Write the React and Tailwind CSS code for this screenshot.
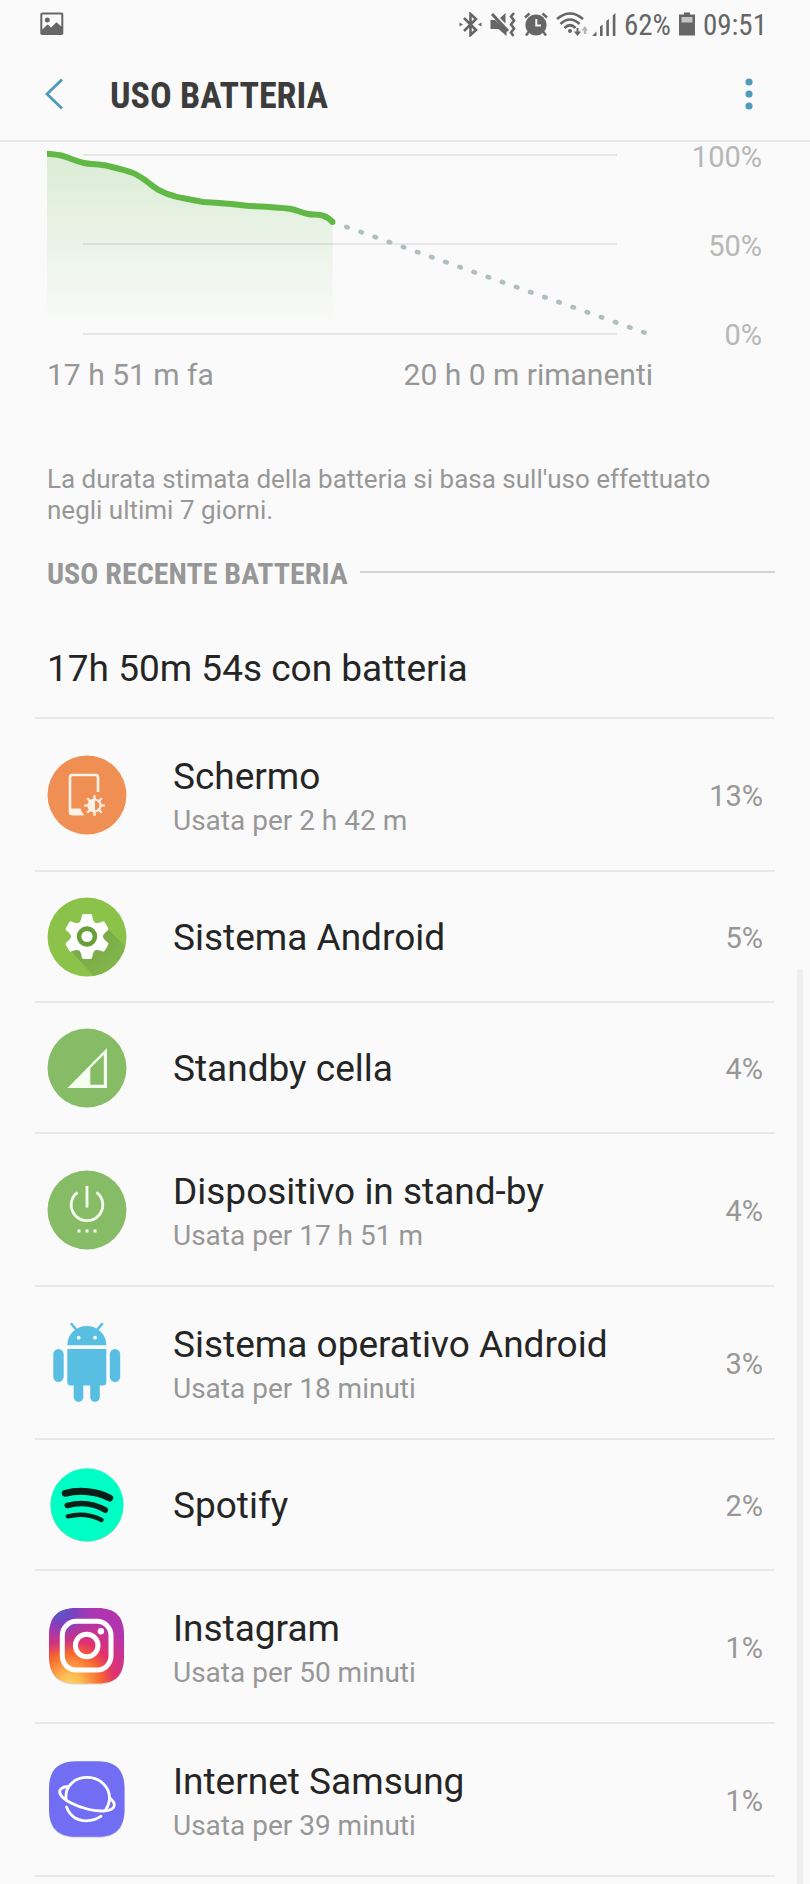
import React from 'react';

const CONDENSED = "font-['Roboto_Condensed','Liberation_Sans_Narrow',Roboto,sans-serif]";

function ScreenIcon() {
    return (
        <svg viewBox="0 0 80 80" className="size-20">
            <circle cx="40" cy="40" r="39.5" fill="#ef8f53" />
            <path d="M51 37V22.500Q51 20 48.500 20H25.500Q23 20 23 22.500V56.500Q23 59 25.500 59H36" fill="none" stroke="#fff3e9" strokeWidth="2.600" />
            <path d="M22 53.500H33.500Q34 57.500 37.500 60.200H25Q22 60.200 22 57Z" fill="#fff3e9" />
            <g stroke="#fff3e9" strokeWidth="2.200">
                {[0, 45, 90, 135, 180, 225, 270, 315].map((deg) => (
                    <path key={deg} d="M47.500 44V40.200" transform={`rotate(${deg} 47.500 50.500)`} />
                ))}
                <circle cx="47.500" cy="50.500" r="6" fill="none" />
            </g>
            <path d="M48 44.500A6 6 0 0 0 48 56.500Z" fill="#fff3e9" />
        </svg>
    );
}

function GearIcon() {
    return (
        <svg viewBox="0 0 80 80" className="size-20">
            <defs>
                <clipPath id="gear-disc"><circle cx="40" cy="40" r="39.500" /></clipPath>
                <linearGradient id="gear-shadow" x1="0.3" y1="0.3" x2="0.75" y2="0.75">
                    <stop offset="0" stopColor="#7aab49" />
                    <stop offset="1" stopColor="#84b84a" />
                </linearGradient>
            </defs>
            <circle cx="40" cy="40" r="39.500" fill="#8bc34a" />
            <path d="M60 31L90 61V90H57L24 54Z" fill="url(#gear-shadow)" clipPath="url(#gear-disc)" />
            <g fill="#fff">
                <circle cx="40" cy="39.500" r="16" />
                {[0, 60, 120, 180, 240, 300].map((deg) => (
                    <path key={deg} d="M29 28.500Q34.300 25.500 34.700 19Q34.900 17 36.700 17H43.300Q45.100 17 45.300 19Q45.700 25.500 51 28.500V36H29Z" transform={`rotate(${deg} 40 39.500)`} />
                ))}
            </g>
            <circle cx="40" cy="39.500" r="7.900" fill="none" stroke="#689f38" strokeWidth="4.600" />
        </svg>
    );
}

function CellIcon() {
    return (
        <svg viewBox="0 0 80 80" className="size-20">
            <circle cx="40" cy="40" r="39.500" fill="#86bc66" />
            <path d="M20.500 60L60 20V60ZM43.300 40V56.700H56.800V26.800Z" fill="#f5fff0" fillRule="evenodd" />
        </svg>
    );
}

function PowerIcon() {
    return (
        <svg viewBox="0 0 80 80" className="size-20">
            <circle cx="40" cy="40" r="39.500" fill="#86bc66" />
            <path d="M30.500 22.300A15.800 15.800 0 1 0 49.500 22.300M40 16V37.500" fill="none" stroke="#f5fff0" strokeWidth="2.800" />
            <path d="M30.500 59.500h3v3h-3zM38.500 59.500h3v3h-3zM46.500 59.500h3v3h-3z" fill="#f5fff0" />
        </svg>
    );
}

function AndroidIcon() {
    return (
        <svg viewBox="0 0 80 80" className="size-20" fill="#58bfe3">
            <path d="M20.300 22.300C20.300 11 29 3 39.800 3S59.300 11 59.300 22.300Z" />
            <path d="M24.500 1L29.500 7M55 1L50 7" stroke="#58bfe3" strokeWidth="2.600" strokeLinecap="round" />
            <path d="M20.300 26H59.300V59Q59.300 62.500 56 62.500H23.500Q20.300 62.500 20.300 59Z" />
            <rect x="6.300" y="26" width="10.400" height="33" rx="5.200" />
            <rect x="62.800" y="26" width="10.400" height="33" rx="5.200" />
            <rect x="26.700" y="54" width="9.600" height="25" rx="4.800" />
            <rect x="43.200" y="54" width="9.600" height="25" rx="4.800" />
            <circle cx="31.700" cy="14.700" r="1.900" fill="#fafafa" />
            <circle cx="48" cy="14.700" r="1.900" fill="#fafafa" />
        </svg>
    );
}

function SpotifyIcon() {
    return (
        <svg viewBox="0 0 80 80" className="size-20">
            <circle cx="40" cy="40.600" r="36.500" fill="#b9cfc8" />
            <circle cx="40" cy="39.800" r="36.500" fill="#00ffc4" />
            <g fill="none" stroke="#0b1f1a" strokeLinecap="round">
                <path d="M18.300 28.300C33 24.500 50 26.500 62.700 33" strokeWidth="7" />
                <path d="M20.300 40.500C33 37 47 38.500 58.300 45" strokeWidth="5.600" />
                <path d="M20.800 51.300C32 48.500 44 49.500 54.500 55" strokeWidth="4.400" />
            </g>
        </svg>
    );
}

function InstagramIcon() {
    return (
        <svg viewBox="0 0 80 80" className="size-20">
            <defs>
                <radialGradient id="ig-warm" cx="0.28" cy="1.02" r="1">
                    <stop offset="0" stopColor="#ffd567" />
                    <stop offset="0.15" stopColor="#fdbb50" />
                    <stop offset="0.42" stopColor="#f8682f" />
                    <stop offset="0.6" stopColor="#e2316c" />
                    <stop offset="0.95" stopColor="#b235b0" />
                </radialGradient>
                <radialGradient id="ig-cool" cx="0.15" cy="0" r="0.6">
                    <stop offset="0" stopColor="#4a5fd0" />
                    <stop offset="0.35" stopColor="#7443c4" stopOpacity="0.85" />
                    <stop offset="1" stopColor="#b235b0" stopOpacity="0" />
                </radialGradient>
            </defs>
            <path d="M30 2H50C69 2 77.300 10.500 77.300 30V50C77.300 69 69 77.600 50 77.600H30C11 77.600 2 69 2 50V30C2 10.500 11 2 30 2Z" fill="#d9d4d2" />
            <path d="M30 1H50C69 1 77 9.500 77 29V49C77 68 69 76.500 50 76.500H30C11 76.500 2 68 2 49V29C2 9.500 11 1 30 1Z" fill="url(#ig-warm)" />
            <path d="M30 1H50C69 1 77 9.500 77 29V49C77 68 69 76.500 50 76.500H30C11 76.500 2 68 2 49V29C2 9.500 11 1 30 1Z" fill="url(#ig-cool)" />
            <g fill="none" stroke="#fff" strokeWidth="5">
                <rect x="15.300" y="14.300" width="48.700" height="48.700" rx="14" />
                <circle cx="39.700" cy="38.500" r="11.300" />
            </g>
            <circle cx="53.900" cy="24.300" r="3.200" fill="#fff" />
        </svg>
    );
}

function SamsungInternetIcon() {
    return (
        <svg viewBox="0 0 80 80" className="size-20">
            <path d="M30 2.200H50C69 2.200 77.500 10.500 77.500 30V50C77.500 69 69 77.800 50 77.800H30C11 77.800 2 69 2 50V30C2 10.500 11 2.200 30 2.200Z" fill="#cfcee0" />
            <path d="M30 1.200H50C69 1.200 77.500 9.500 77.500 29V49C77.500 68 69 76.800 50 76.800H30C11 76.800 2 68 2 49V29C2 9.500 11 1.200 30 1.200Z" fill="#716ef3" />
            <g fill="none" stroke="#fff" strokeWidth="2.800" strokeLinecap="round">
                <path d="M19 38C18 26 28 17.300 40 17.300C53 17.300 63 27 62.500 39C62.300 43 61 46.500 58.500 50" />
                <path d="M20.500 26.500C15 27 11.500 29.500 13 33.500C15.500 40 29 46.500 42 49.500C54 52 65 51.500 67 46.500C68.200 43.500 66 40.500 62.500 38" />
                <path d="M19.500 47C23 56 30.500 60.800 39.500 60.800C45 60.800 50 59 54 56.200" />
            </g>
        </svg>
    );
}

const APPS = [
    { name: 'Schermo', usage: 'Usata per 2 h 42 m', percent: '13%', Icon: ScreenIcon },
    { name: 'Sistema Android', percent: '5%', Icon: GearIcon },
    { name: 'Standby cella', percent: '4%', Icon: CellIcon },
    { name: 'Dispositivo in stand-by', usage: 'Usata per 17 h 51 m', percent: '4%', Icon: PowerIcon },
    { name: 'Sistema operativo Android', usage: 'Usata per 18 minuti', percent: '3%', Icon: AndroidIcon },
    { name: 'Spotify', percent: '2%', Icon: SpotifyIcon },
    { name: 'Instagram', usage: 'Usata per 50 minuti', percent: '1%', Icon: InstagramIcon },
    { name: 'Internet Samsung', usage: 'Usata per 39 minuti', percent: '1%', Icon: SamsungInternetIcon },
];

function StatusBar() {
    return (
        <div className="flex h-12 items-center justify-between pl-10 pr-[43px] text-[#666666]">
            <svg viewBox="0 0 24 24" className="size-6">
                <path d="M2.500 0.500H21.500Q23.300 0.500 23.300 2.300V21.200Q23.300 23 21.500 23H2Q0.300 23 0.300 21.200V2.300Q0.300 0.500 2.500 0.500ZM2.300 2.500V17.500L7.500 12.500L11 15.500L16.500 10.200L21.300 14.500V2.500Z" fill="currentColor" fillRule="evenodd" />
                <circle cx="7.300" cy="8" r="2.500" fill="currentColor" />
            </svg>
            <div className="flex items-center">
                {/* Bluetooth, connected */}
                <svg viewBox="0 0 23 25" className="mr-2 h-[25px] w-[23px]" fill="none" stroke="currentColor" strokeWidth="2.600">
                    <path d="M5 6L17 18L11.500 23V2L17 7L5 19" />
                    <path d="M0.500 10.500L4 12.500L0.500 14.500ZM22.500 10.500L19 12.500L22.500 14.500Z" fill="currentColor" stroke="none" />
                </svg>
                {/* Muted, vibrate */}
                <svg viewBox="0 0 26 25" className="mr-2 h-[25px] w-[26px]" fill="currentColor">
                    <path d="M0.500 8H5L16.500 18V24L8.500 17H0.500ZM10 6L15.500 1V11.500Z" />
                    <path d="M2 2L18 19" stroke="currentColor" strokeWidth="3" />
                    <path d="M24 1L21 4.500L24 8.500L21 12.500L24 16.500L21 20.500L23.500 24" fill="none" stroke="currentColor" strokeWidth="2.600" />
                </svg>
                {/* Alarm */}
                <svg viewBox="0 0 24 25" className="mr-2 h-[25px] w-6" fill="none" stroke="currentColor" strokeWidth="2.400">
                    <circle cx="12" cy="13" r="10.600" fill="currentColor" stroke="none" />
                    <path d="M1 5.500L5.500 1.500M23 5.500L18.500 1.500M4.500 20L2 23.500M19.500 20L22 23.500" />
                    <path d="M12.300 7V13.500H17" stroke="#fafafa" strokeWidth="2" />
                </svg>
                {/* Wi-Fi with traffic arrows */}
                <svg viewBox="0 0 32 25" className="mr-1 h-[25px] w-8" fill="none" stroke="currentColor" strokeWidth="2.600">
                    <path d="M1 7Q14 -4 27 7M4.500 12Q14 3 23.500 12M8.500 16Q14 10.500 19.500 16" />
                    <circle cx="14" cy="19" r="2" fill="currentColor" stroke="none" />
                    <path d="M21.500 16V21" strokeWidth="2" />
                    <path d="M17.800 19.500H25.200L21.500 24Z" fill="currentColor" stroke="none" />
                    <path d="M29 22V17" stroke="#b5b5b5" strokeWidth="2.400" />
                    <path d="M25.500 18.500L29 14L32 18.500Z" fill="#b5b5b5" stroke="none" />
                </svg>
                {/* Cell signal */}
                <svg viewBox="0 0 24 25" className="mr-2 h-[25px] w-6" fill="currentColor">
                    <path d="M0 24L4.500 19.500V24ZM8 24V14.500L10.600 12.500V24ZM14.300 24V9L16.900 7V24ZM20.800 24V3.500L23.400 1V24Z" />
                </svg>
                <span className={`${CONDENSED} pt-0.5 text-[29px] leading-9`}>62%</span>
                <svg viewBox="0 0 16 24" className="mx-2 h-6 w-4">
                    <path d="M5 0.500H11V2.500H16V23.500H0V2.500H5Z" fill="currentColor" />
                    <path d="M2.500 5H13.500V10.500H2.500Z" fill="#c4c4c4" />
                </svg>
                <span className={`${CONDENSED} pt-0.5 text-[29px] leading-9`}>09:51</span>
            </div>
        </div>
    );
}

function Header() {
    return (
        <header className="flex h-[94px] items-center border-b-2 border-[#e7e7e7] pl-10 pr-[45px]">
            <button type="button" aria-label="Indietro" className="mr-[42px] flex h-12 w-7 items-center justify-center">
                <svg viewBox="0 0 20 32" className="h-8 w-5" fill="none" stroke="#4f9bb9" strokeWidth="2.800">
                    <path d="M18 1.500L3 16L18 30.500" />
                </svg>
            </button>
            <h1 className={`${CONDENSED} flex-1 pt-1 text-4xl font-bold text-[#3c3c3c]`}>USO BATTERIA</h1>
            <button type="button" aria-label="Altre opzioni" className="flex h-12 w-8 items-center justify-center">
                <svg viewBox="0 0 8 32" className="h-8 w-2" fill="#4f9bb9">
                    <circle cx="4" cy="4" r="3.600" />
                    <circle cx="4" cy="16" r="3.600" />
                    <circle cx="4" cy="28" r="3.600" />
                </svg>
            </button>
        </header>
    );
}

function BatteryChart() {
    const curve = 'M0 11.700C4 11.700 9 12.500 13 13.300C21 15 28 19 36 20.700C44 22.500 52 22 59.700 23.700C69 26 78 28 86 31C91 33 95 36 99.700 39.300C104 42.500 108 46 113 48.700C118 51.500 122 53 128 54.300C137 56.500 147 58 156.300 60C171 60.500 185 62 199.700 63.700C214 64.500 228 65 243 66.700C250 68 255 71 261 72C266 73 271 72 276 73.700C280 75 283 77.500 285.700 80';

    return (
        <section className="flex pl-[47px] pr-12">
            <div className="flex-1">
                <svg viewBox="0 0 606 210" className="w-full" fill="none">
                    <defs>
                        <linearGradient id="charge" x1="0" y1="0" x2="0" y2="1">
                            <stop offset="0" stopColor="#62b846" stopOpacity="0.21" />
                            <stop offset="1" stopColor="#62b846" stopOpacity="0" />
                        </linearGradient>
                    </defs>
                    <path d={`${curve}V186H0Z`} fill="url(#charge)" />
                    <path d="M36 13H570M36 102H570M36 192H570" stroke="#000" strokeOpacity="0.08" strokeWidth="2" />
                    <path d="M299.300 84.800L598 190.700" stroke="#b0bec2" strokeWidth="4.600" strokeLinecap="round" strokeDasharray="1.500 13.500" />
                    <path d={curve} stroke="#62b846" strokeWidth="6" />
                    <circle cx="285.500" cy="80" r="3" fill="#62b846" />
                </svg>
                <div className="flex justify-between text-3xl leading-[46px] text-[#979797]">
                    <span>17 h 51 m fa</span>
                    <span>20 h 0 m rimanenti</span>
                </div>
            </div>
            <div className="flex w-[109px] flex-col items-end gap-[59px] text-[29px] leading-[30px] text-[#b7b7b7]">
                <span>100%</span>
                <span>50%</span>
                <span>0%</span>
            </div>
        </section>
    );
}

function AppRow({ app }) {
    const { name, usage, percent, Icon } = app;
    return (
        <li className={`flex items-center border-t-2 border-[#e8e8e8] px-3 ${usage ? 'h-[153px]' : 'h-[131px]'}`}>
            <Icon />
            <div className={`ml-[46px] flex-1 ${usage ? 'pt-2' : 'pt-0.5'}`}>
                <p className="text-[37px] leading-[44px] text-[#252525]">{name}</p>
                {usage && <p className="text-[28px] leading-[44px] text-[#979797]">{usage}</p>}
            </div>
            <span className="pt-1 text-[29px] text-[#979797]">{percent}</span>
        </li>
    );
}

export default function App() {
    return (
        <div className="relative overflow-hidden bg-[#fafafa] font-[Roboto,sans-serif]">
            <StatusBar />
            <Header />
            <main>
                <BatteryChart />
                <p className="mt-[66px] pl-[47px] pr-12 text-[26px] leading-[31px] text-[#979797]">
                    La durata stimata della batteria si basa sull'uso effettuato negli ultimi 7 giorni.
                </p>
                <div className="mt-7 flex items-center gap-3 pl-[47px] pr-[35px]">
                    <h2 className={`${CONDENSED} pt-1 text-3xl leading-8 font-bold text-[#979797]`}>USO RECENTE BATTERIA</h2>
                    <div className="h-0.5 flex-1 bg-[#d2d2d2]" />
                </div>
                <p className="pb-[26px] pl-[47px] pt-14 text-[37px] leading-[45px] text-[#252525]">17h 50m 54s con batteria</p>
                <ul className="mx-[35px] border-b-2 border-[#e8e8e8]">
                    {APPS.map((app) => <AppRow key={app.name} app={app} />)}
                </ul>
                <div className="h-[7px]" />
            </main>
            {/* Scroll thumb */}
            <div className="absolute bottom-0 right-[7px] top-[969px] w-1.5 rounded-t-full bg-[#eeeeee]" />
        </div>
    );
}
